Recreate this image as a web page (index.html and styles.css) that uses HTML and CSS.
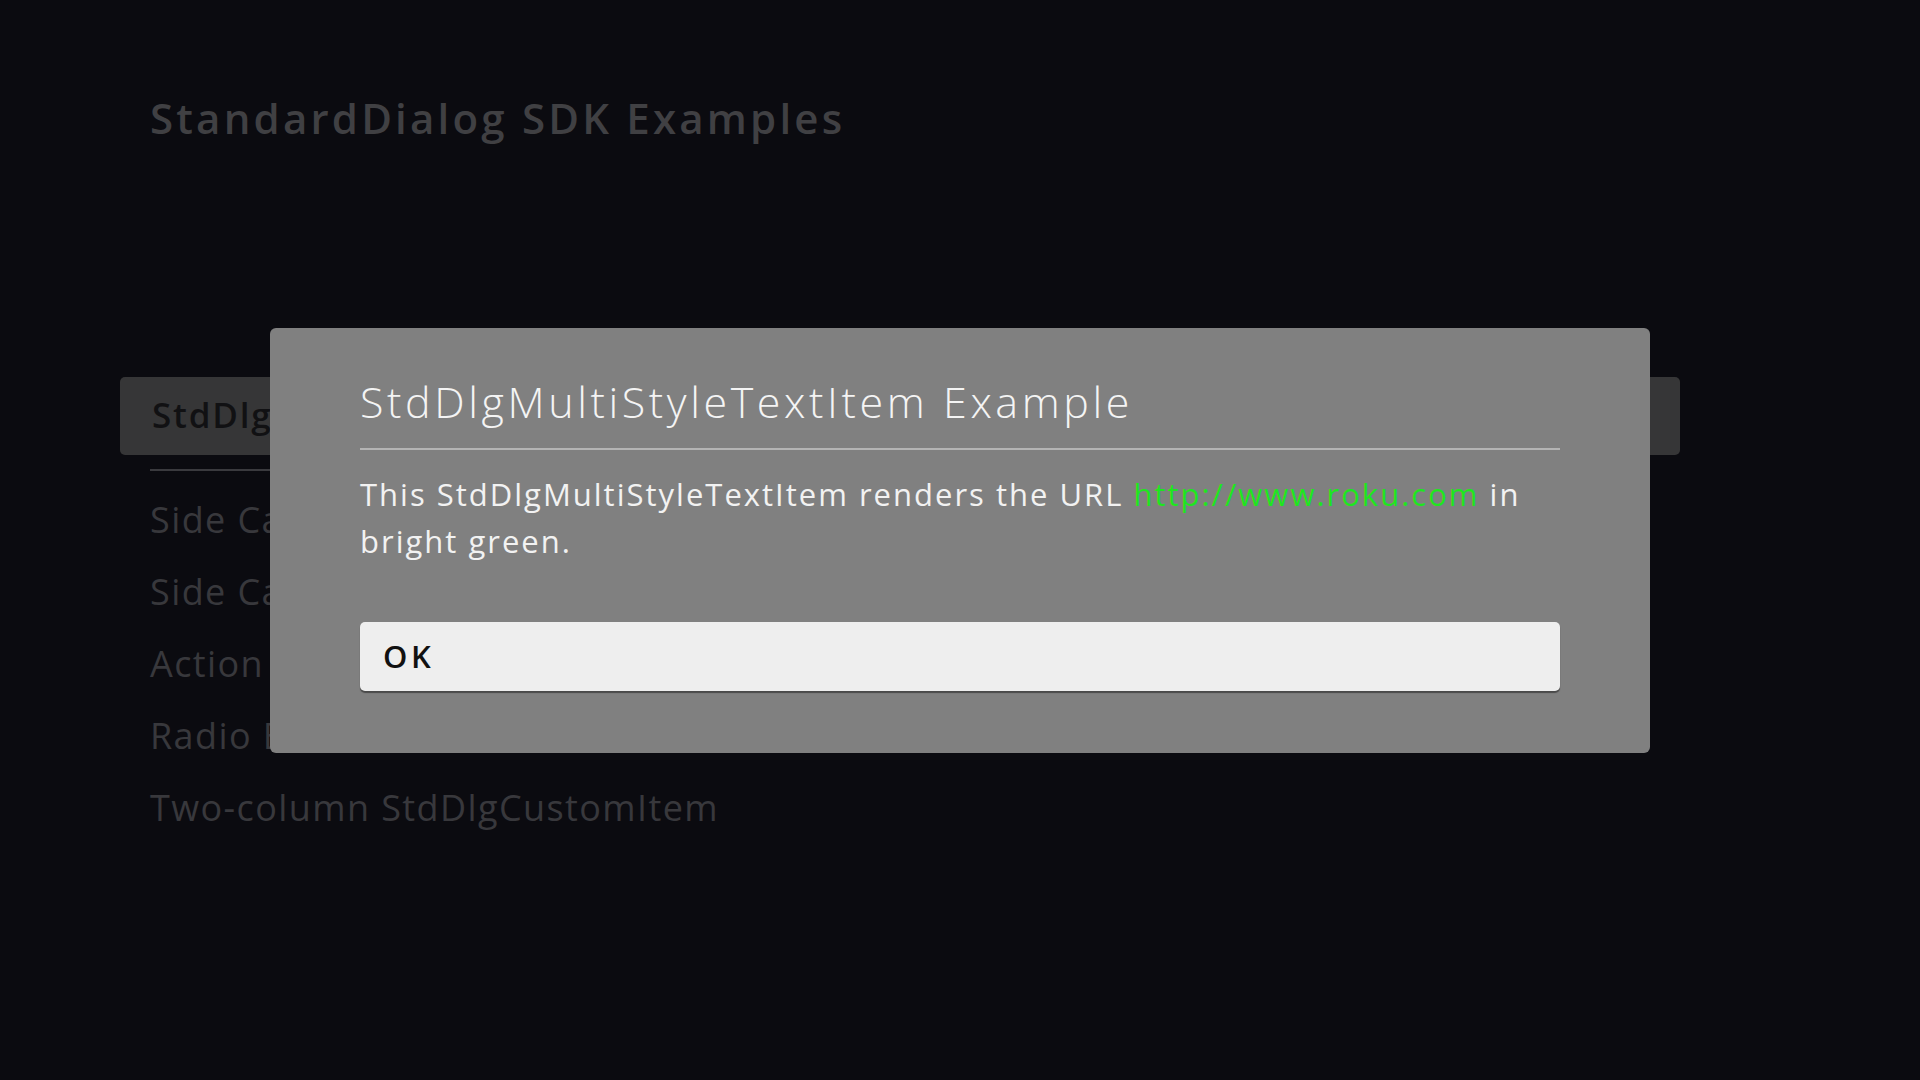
FILE: index.html
```html
<!DOCTYPE html>
<html lang="en">
<head>
<meta charset="utf-8">
<title>StandardDialog SDK Examples</title>
<link rel="stylesheet" href="styles.css">
</head>
<body>
<div class="page">
  <h1 class="title">StandardDialog SDK Examples</h1>
  <div class="menu">
    <div class="row-focused">StdDlgMultiStyleTextItem</div>
    <div class="rule"></div>
    <ul class="items">
      <li>Side Card Left</li>
      <li>Side Card Right</li>
      <li>Action Buttons</li>
      <li>Radio Buttons</li>
      <li>Two-column StdDlgCustomItem</li>
    </ul>
  </div>
</div>
<div class="overlay">
  <div class="dialog">
    <div class="dlg-title">StdDlgMultiStyleTextItem Example</div>
    <div class="dlg-divider"></div>
    <p class="dlg-text">This StdDlgMultiStyleTextItem renders the URL <span class="url">http://www.roku.com</span> in<br>bright green.</p>
    <div class="dlg-button">OK</div>
  </div>
</div>
</body>
</html>
```
FILE: styles.css
```css
html, body {
  margin: 0;
  padding: 0;
  width: 1920px;
  height: 1080px;
  overflow: hidden;
  background: #0b0b10;
  font-family: "Open Sans", "Liberation Sans", sans-serif;
}

.page {
  padding: 93px 0 0 120px;
}

.title {
  margin: 0 0 0 30px;
  font-size: 42px;
  line-height: 50px;
  font-weight: 600;
  letter-spacing: 3.2px;
  color: #404043;
}

.menu {
  margin-top: 234px;
}

.row-focused {
  box-sizing: border-box;
  width: 1560px;
  height: 78px;
  padding: 0 0 4px 32px;
  display: flex;
  align-items: center;
  background: #363637;
  border-radius: 5px;
  font-size: 35px;
  font-weight: 600;
  letter-spacing: 1.8px;
  color: #111113;
}

.rule {
  margin: 14px 0 0 30px;
  width: 1500px;
  height: 2px;
  background: #3a3a3e;
}

.items {
  list-style: none;
  margin: 13px 0 0 30px;
  padding: 0;
}

.items li {
  font-size: 36px;
  line-height: 72px;
  letter-spacing: 1.4px;
  color: #38383c;
}

.overlay {
  position: fixed;
  inset: 0;
  display: flex;
  align-items: center;
  justify-content: center;
}

.dialog {
  box-sizing: border-box;
  width: 1380px;
  height: 425px;
  padding: 48px 90px 0 90px;
  background: #808080;
  border-radius: 6px;
}

.dlg-title {
  font-size: 43px;
  line-height: 52px;
  font-weight: 300;
  letter-spacing: 3.6px;
  color: #f4f4f4;
}

.dlg-divider {
  margin-top: 20px;
  height: 2px;
  background: #b4b4b4;
}

.dlg-text {
  margin: 21px 0 0 0;
  font-size: 31px;
  line-height: 47px;
  letter-spacing: 2px;
  color: #f2f2f2;
}

.url {
  color: #1ee61e;
}

.dlg-button {
  margin-top: 57px;
  height: 69px;
  box-sizing: border-box;
  padding-left: 23px;
  display: flex;
  align-items: center;
  background: #eeeeee;
  border-radius: 5px;
  box-shadow: 0 2px 1px #4a4a4a;
  font-size: 31px;
  font-weight: 600;
  letter-spacing: 3.5px;
  color: #111111;
}
```
